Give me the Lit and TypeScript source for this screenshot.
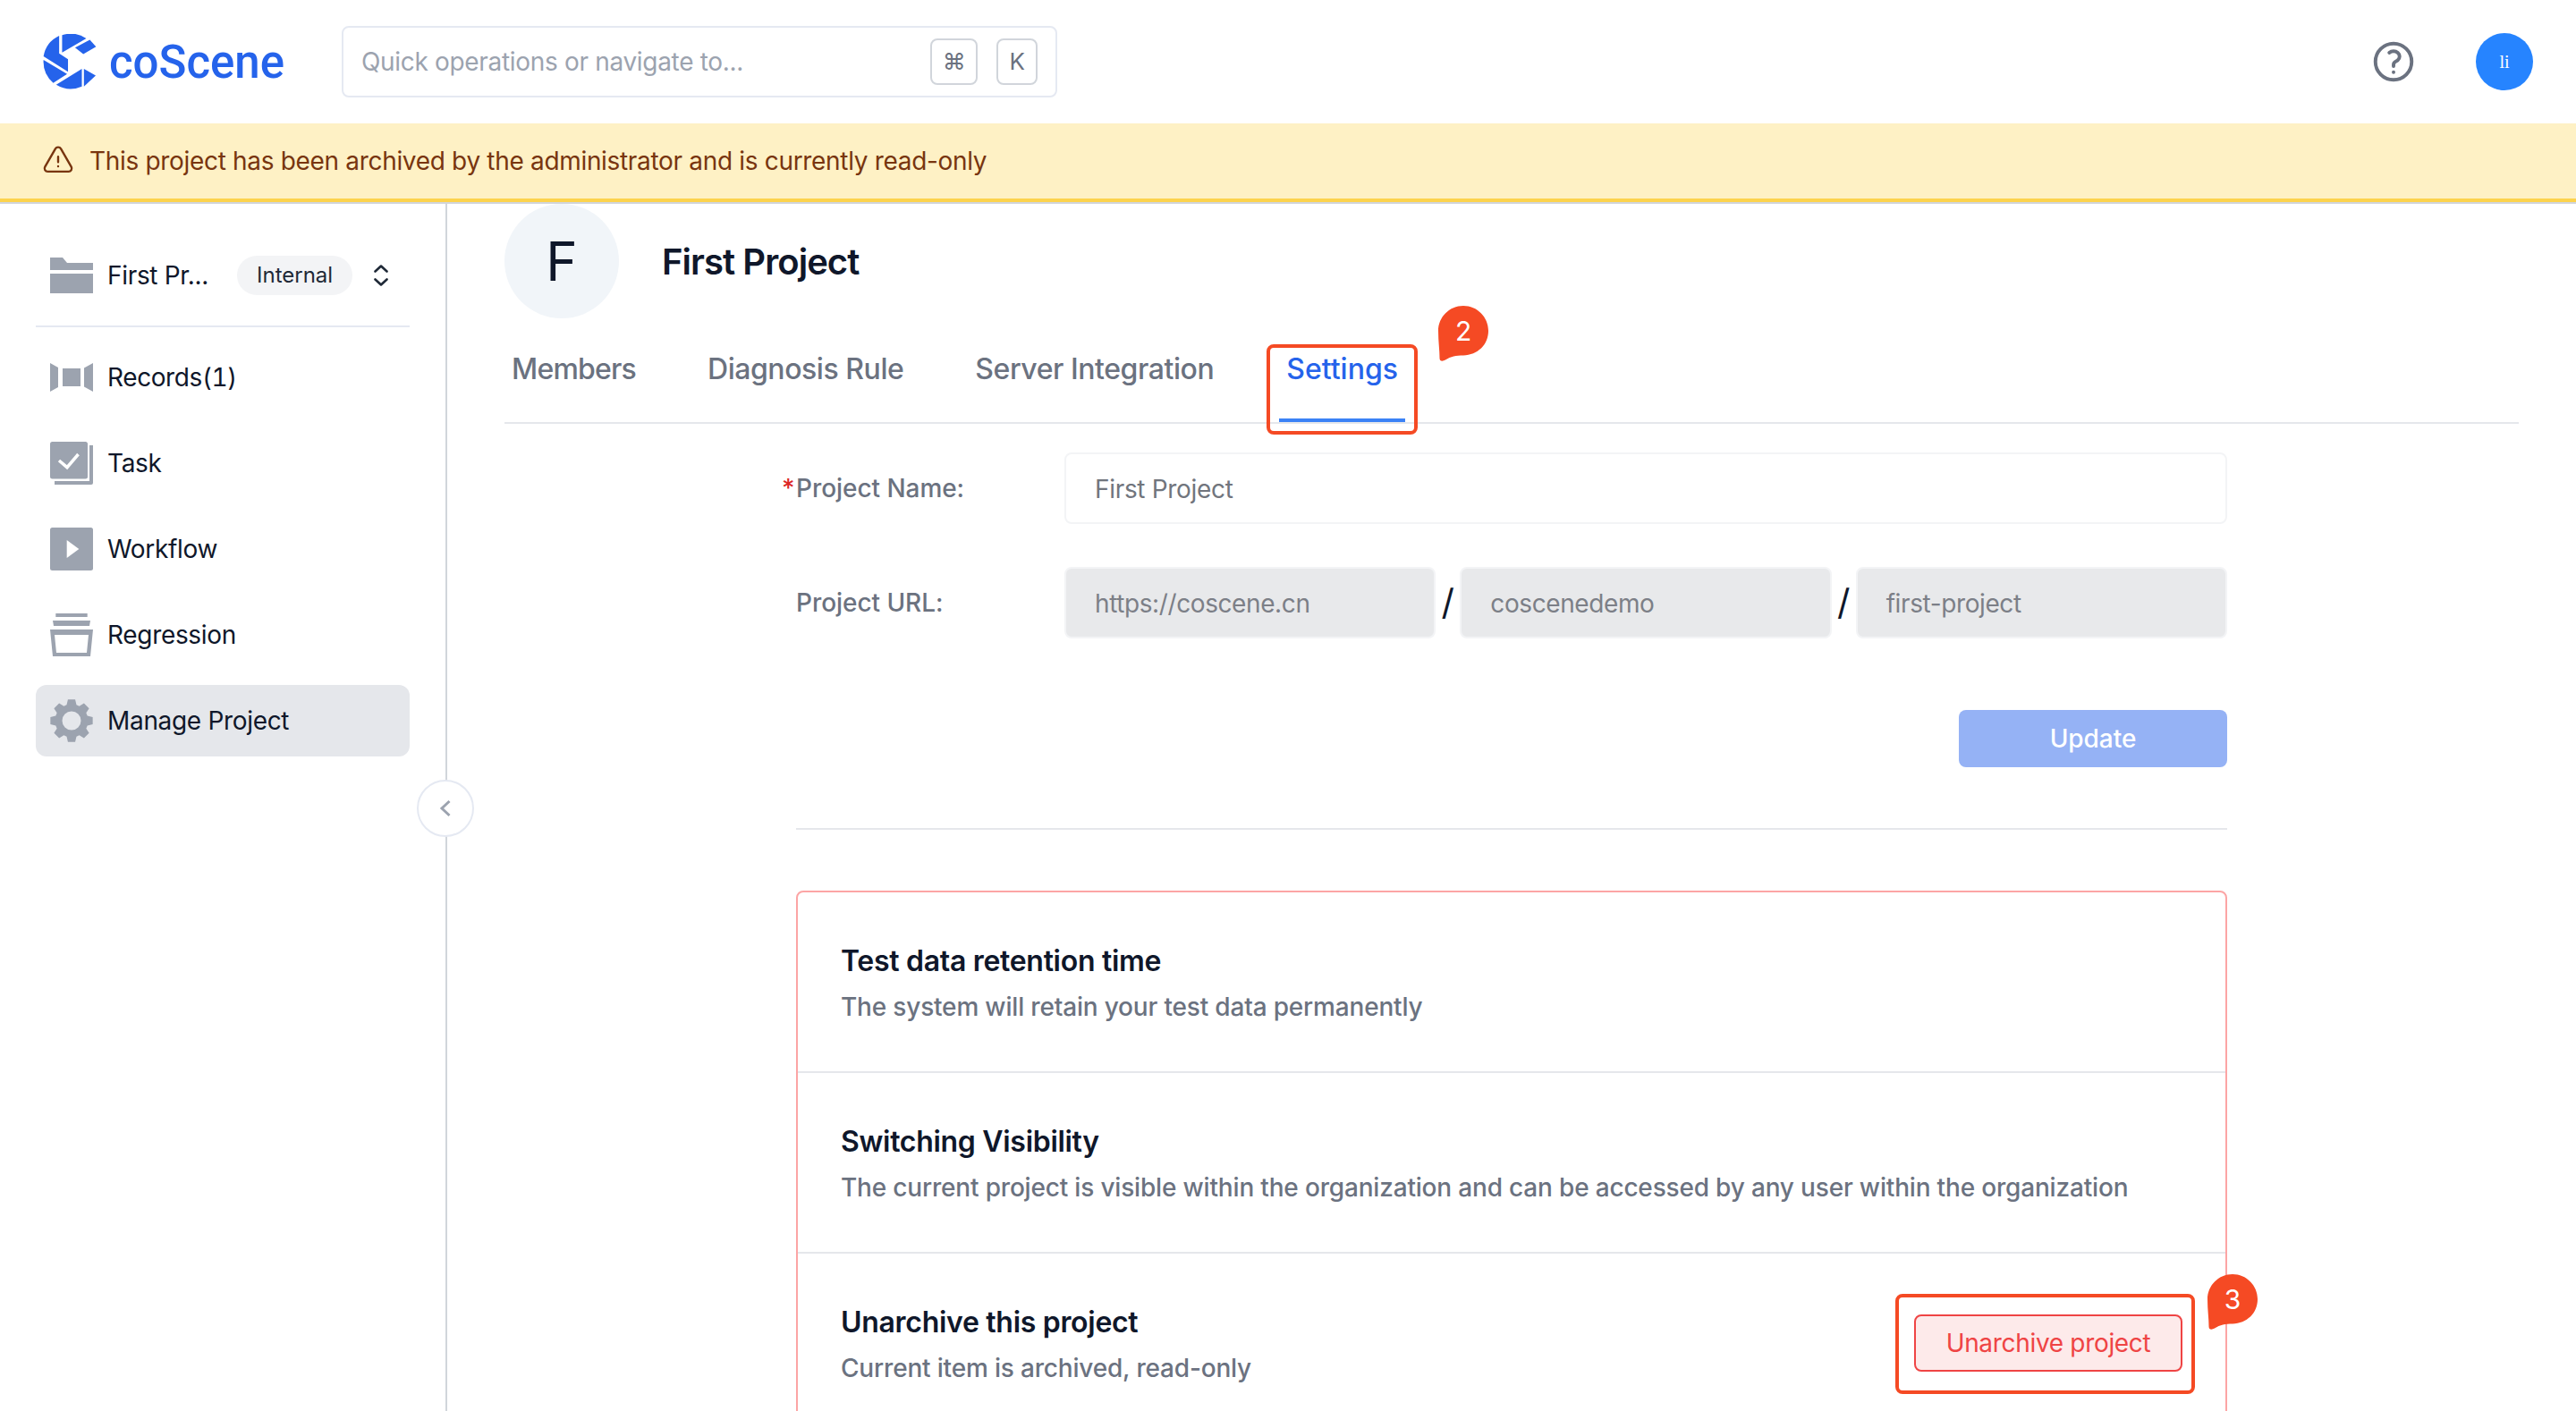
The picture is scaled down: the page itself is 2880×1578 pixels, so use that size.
import { LitElement, html, css } from "lit";
import { customElement } from "lit/decorators.js";

function gearPath(): string {
  const cx = 24, cy = 24, teeth = 8, outer = 24, root = 18.5, pts: string[] = [];
  const step = (Math.PI * 2) / teeth;
  for (let i = 0; i < teeth; i++) {
    const a = -Math.PI / 2 + i * step;
    const p = (r: number, d: number) =>
      `${(cx + r * Math.cos(a + d)).toFixed(2)} ${(cy + r * Math.sin(a + d)).toFixed(2)}`;
    pts.push(p(root, -0.3), p(outer, -0.17), p(outer, 0.17), p(root, 0.3));
  }
  return `M${pts.join("L")}Z M24 13.5a10.5 10.5 0 1 0 0 21a10.5 10.5 0 1 0 0-21Z`;
}

const bubble = (n: string, cls: string) => html`
  <div class="bubble ${cls}">
    <svg viewBox="0 0 56 62" width="56" height="62"><path fill="#f54a24" d="M28 0C43.5 0 56 12.5 56 28C56 43.5 44 55 28 55.5C20 55.7 14 56.5 8 60.5C4.5 62.5 1.5 62 1.5 58.5C1.500 50 0 40 0 28C0 12.5 12.5 0 28 0Z"/></svg>
    <span>${n}</span>
  </div>`;

@customElement("app-root")
export class AppRoot extends LitElement {
  static styles = css`
    :host { display: block; width: 100%; height: 100vh; overflow: hidden; background: #fff; font-family: Inter, "Liberation Sans", sans-serif; font-size: 28px; line-height: 40px; color: #0f172a; letter-spacing: -0.32px; }
    * { box-sizing: border-box; }
    .app { display: flex; flex-direction: column; height: 100%; }
    .header { flex: none; height: 138px; display: flex; align-items: center; padding: 0 48px; }
    .brand { width: 334px; display: flex; align-items: center; gap: 14px; flex: none; }
    .brand svg { display: block; }
    .brand-text { font-family: Roboto, sans-serif; font-weight: 500; font-size: 51px; line-height: 60px; color: #2563eb; letter-spacing: 0; padding-top: 2px; }
    .search { width: 800px; height: 80px; border: 2px solid #e5e9f2; border-radius: 8px; display: flex; align-items: center; padding: 0 20px; gap: 21px; color: #9ca3af; }
    .search-text { flex: 1; }
    .kbd { height: 52px; border: 2px solid #d1d5db; border-radius: 8px; display: flex; align-items: center; justify-content: center; color: #6b7280; font-size: 26px; }
    .kbd.cmd { width: 53px; }
    .kbd.k { width: 46px; }
    .right { margin-left: auto; display: flex; align-items: center; gap: 65px; }
    .right svg { display: block; }
    .user { width: 64px; height: 64px; border-radius: 50%; background: #2684ff; color: #fff; font-family: "Liberation Serif", serif; font-size: 20px; letter-spacing: 0; display: flex; align-items: center; justify-content: center; }
    .banner { flex: none; height: 88px; padding: 0 46px; background: #fef1c5; border-bottom: 4px solid #fcd34d; box-shadow: 0 2px 0 #d1d5db; display: flex; align-items: center; gap: 16px; color: #78350f; position: relative; z-index: 1; }
    .banner svg { display: block; flex: none; }
    .content { flex: 1; min-height: 0; display: flex; padding-top: 2px; }
    .side { flex: none; width: 500px; border-right: 2px solid #d1d5db; position: relative; padding: 0 40px; }
    .proj { height: 138px; border-bottom: 2px solid #e5e9f2; display: flex; align-items: center; padding: 24px 0 0 16px; }
    .proj svg { display: block; flex: none; }
    .proj-name { width: 113px; margin-left: 16px; margin-right: 1px; white-space: nowrap; }
    .badge { margin-left: 31px; height: 44px; padding: 0 22px; border-radius: 22px; background: #f3f4f6; color: #1f2937; font-size: 24px; letter-spacing: 0; display: flex; align-items: center; }
    .updown { margin-left: 24px; }
    .nav { display: flex; flex-direction: column; gap: 16px; padding-top: 16px; }
    .item { height: 80px; display: flex; align-items: center; gap: 16px; padding-left: 16px; border-radius: 12px; }
    .item svg { display: block; flex: none; }
    .item.on { background: #e5e7eb; }
    .count { font-variant-numeric: tabular-nums; letter-spacing: -0.4px; }
    .collapse { position: absolute; right: -32px; top: 644px; width: 64px; height: 64px; border-radius: 50%; background: #fff; border: 2px solid #e5e9f2; display: flex; align-items: center; justify-content: center; }
    .main { flex: 1; min-width: 0; padding: 0 64px; overflow: hidden; }
    .head { display: flex; align-items: center; gap: 48px; height: 128px; }
    .logo { width: 128px; height: 128px; border-radius: 50%; background: #f1f5f9; display: flex; align-items: center; justify-content: center; font-size: 60px; line-height: 72px; letter-spacing: 0; }
    .name { font-size: 40px; line-height: 56px; font-weight: 600; letter-spacing: -0.95px; padding-top: 2px; }
    .tabs { height: 118px; border-bottom: 2px solid #e5e7eb; display: flex; }
    .tab { position: relative; padding: 33px 8px 0; margin-right: 64px; border-bottom: 4px solid transparent; font-size: 32px; line-height: 48px; font-weight: 500; color: #6b7280; height: 116px; letter-spacing: -0.45px; }
    .tab.first { letter-spacing: -0.8px; }
    .tab.on { color: #2563eb; border-bottom-color: #3b82f6; letter-spacing: 0; margin-left: 1px; margin-right: 0; }
    .mark { position: absolute; border: 4px solid #f54a24; border-radius: 8px; pointer-events: none; letter-spacing: 0; }
    .tab .mark { left: -14px; top: 29px; width: 169px; height: 101px; }
    .bubble { position: absolute; width: 56px; height: 62px; color: #fff; }
    .bubble svg { display: block; }
    .bubble span { position: absolute; left: 0; top: 0; width: 56px; height: 56px; display: flex; align-items: center; justify-content: center; font-size: 30px; font-weight: 400; line-height: 1; letter-spacing: 0; }
    .b2 { left: 178px; top: -14px; }
    .b3 { left: 326px; top: -47px; }
    .form { width: 1600px; margin: 0 auto; padding-top: 32px; }
    .row { display: flex; align-items: center; height: 80px; margin-bottom: 48px; }
    .label { width: 300px; flex: none; font-weight: 500; color: #6b7280; letter-spacing: -0.05px; }
    .req { display: inline-block; width: 16px; margin-left: -16px; color: #dc2626; }
    .fields { flex: 1; display: flex; align-items: center; }
    .input { flex: 1; min-width: 0; height: 80px; border: 2px solid #f3f4f6; border-radius: 8px; padding: 1px 32px 0; display: flex; align-items: center; color: #71757d; }
    .input.off { background: #e8e9eb; color: #7c7f87; letter-spacing: -0.4px; }
    .slash { width: 27px; flex: none; text-align: center; font-size: 40px; color: #0f172a; letter-spacing: 0; }
    .actions { display: flex; justify-content: flex-end; margin-top: 80px; }
    .update { width: 300px; height: 64px; border-radius: 8px; background: #95b2f5; color: #fff; font-weight: 500; letter-spacing: -0.05px; display: flex; align-items: center; justify-content: center; }
    .rule { height: 2px; background: #e5e7eb; margin: 68px 0; }
    .card { border: 2px solid #fca5a5; border-radius: 8px; }
    .card-row { height: 200px; padding: 0 48px; display: flex; align-items: center; justify-content: space-between; }
    .card-row + .card-row { height: 202px; border-top: 2px solid #e5e7eb; }
    .title { font-size: 32px; line-height: 48px; font-weight: 600; letter-spacing: -0.3px; margin-top: 1px; }
    .desc { margin-top: 7px; color: #6b7280; font-weight: 500; letter-spacing: -0.18px; }
    .btn { position: relative; width: 300px; height: 64px; border: 2px solid #ef4444; border-radius: 8px; background: #fdeaea; color: #ef4444; display: flex; align-items: center; justify-content: center; }
    .btn .mark { left: -23px; top: -25px; width: 335px; height: 112px; }
  `;

  render() {
    return html`
      <div class="app">
        <header class="header">
          <div class="brand">
            <svg viewBox="54 54 180 188" width="60" height="62" fill="#2563eb">
              <path d="M118 58A95 95 0 0 1 200 69L118 117Z"/>
              <path d="M162 100L212 74L233 97L190 122Z"/>
              <path d="M108 60A95 95 0 0 0 55 130L138 182L138 140L108 120Z"/>
              <path d="M55 142A95 95 0 0 0 88 220L135 190Z"/>
              <path d="M98 226A95 95 0 0 0 185 232L185 172Z"/>
              <path d="M192 172L232 195L192 232Z"/>
            </svg>
            <span class="brand-text">coScene</span>
          </div>
          <div class="search">
            <span class="search-text">Quick operations or navigate to...</span>
            <span class="kbd cmd">⌘</span>
            <span class="kbd k">K</span>
          </div>
          <div class="right">
            <svg viewBox="0 0 24 24" width="54" height="54" fill="none" stroke="#6b7280" stroke-width="1.75" stroke-linecap="round" stroke-linejoin="round"><path d="M9.879 7.519c1.171-1.025 3.071-1.025 4.242 0 1.172 1.025 1.172 2.687 0 3.712-.203.179-.43.326-.67.442-.745.361-1.45.999-1.45 1.827v.75M21 12a9 9 0 11-18 0 9 9 0 0118 0zm-9 5.25h.008v.008H12v-.008z"/></svg>
            <div class="user">li</div>
          </div>
        </header>
        <div class="banner">
          <svg viewBox="0 0 24 24" width="38" height="38" fill="none" stroke="#78350f" stroke-width="1.5" stroke-linecap="round" stroke-linejoin="round"><path d="M12 9v3.75m-9.303 3.376c-.866 1.5.217 3.374 1.948 3.374h14.71c1.73 0 2.813-1.874 1.948-3.374L13.949 3.378c-.866-1.5-3.032-1.5-3.898 0L2.697 16.126zM12 15.75h.007v.008H12v-.008z"/></svg>
          <span>This project has been archived by the administrator and is currently read-only</span>
        </div>
        <div class="content">
          <aside class="side">
            <div class="proj">
              <svg viewBox="0 0 48 40" width="48" height="40" fill="#9ca3af"><path d="M0 0H14L19 6H48V14H0Z"/><path d="M0 18H48V40H0Z"/></svg>
              <span class="proj-name">First Pr...</span>
              <span class="badge">Internal</span>
              <svg class="updown" viewBox="0 0 16 24" width="16" height="24" fill="none" stroke="#1f2937" stroke-width="2.6" stroke-linecap="round" stroke-linejoin="round"><path d="M1.5 7.5L8 1.5L14.5 7.5"/><path d="M1.5 16.5L8 22.5L14.5 16.5"/></svg>
            </div>
            <nav class="nav">
              <div class="item">
                <svg viewBox="0 0 48 32" width="48" height="32" fill="#9ca3af"><path d="M0 0L9 5V27L0 32Z"/><path d="M14 6H34V26H14Z"/><path d="M48 0L38 5.5V26.5L48 32Z"/></svg>
                <span class="count">Records(1)</span>
              </div>
              <div class="item">
                <svg viewBox="0 0 48 48" width="48" height="48"><rect width="42" height="41.5" rx="2.5" fill="#9ca3af"/><path fill="#9ca3af" d="M44 4h4v42a2 2 0 0 1-2 2H5v-4h39Z"/><path d="M10 21L19 28.7L31.5 14" fill="none" stroke="#fff" stroke-width="3.5"/></svg>
                <span>Task</span>
              </div>
              <div class="item">
                <svg viewBox="0 0 48 48" width="48" height="48"><rect width="48" height="48" rx="2.5" fill="#9ca3af"/><path d="M18.7 14L32.3 24L18.7 34Z" fill="#fff"/></svg>
                <span>Workflow</span>
              </div>
              <div class="item">
                <svg viewBox="0 0 48 48" width="48" height="48" fill="#9ca3af"><path d="M6.300 0H41.700V4H6.300Z"/><path d="M3 8H45L44 14H4Z"/><path fill-rule="evenodd" d="M0 18H48L45 48H3ZM5 24L7 44H41L43 24Z"/></svg>
                <span>Regression</span>
              </div>
              <div class="item on">
                <svg viewBox="0 0 48 48" width="48" height="48" fill="#9ca3af"><path fill-rule="evenodd" d="${gearPath()}"/></svg>
                <span>Manage Project</span>
              </div>
            </nav>
            <div class="collapse">
              <svg viewBox="0 0 14 20" width="14" height="20" fill="none" stroke="#9ca3af" stroke-width="3"><path d="M11.500 2L3 10L11.500 18"/></svg>
            </div>
          </aside>
          <main class="main">
            <div class="head">
              <div class="logo">F</div>
              <div class="name">First Project</div>
            </div>
            <div class="tabs">
              <div class="tab first">Members</div>
              <div class="tab">Diagnosis Rule</div>
              <div class="tab">Server Integration</div>
              <div class="tab on">Settings<div class="mark"></div>${bubble("2", "b2")}</div>
            </div>
            <div class="form">
              <div class="row">
                <div class="label"><span class="req">*</span>Project Name:</div>
                <div class="fields"><div class="input">First Project</div></div>
              </div>
              <div class="row">
                <div class="label">Project URL:</div>
                <div class="fields">
                  <div class="input off">https://coscene.cn</div>
                  <div class="slash">/</div>
                  <div class="input off">coscenedemo</div>
                  <div class="slash">/</div>
                  <div class="input off">first-project</div>
                </div>
              </div>
              <div class="actions"><div class="update">Update</div></div>
              <div class="rule"></div>
              <div class="card">
                <div class="card-row">
                  <div><div class="title">Test data retention time</div><div class="desc">The system will retain your test data permanently</div></div>
                </div>
                <div class="card-row">
                  <div><div class="title">Switching Visibility</div><div class="desc">The current project is visible within the organization and can be accessed by any user within the organization</div></div>
                </div>
                <div class="card-row">
                  <div><div class="title">Unarchive this project</div><div class="desc">Current item is archived, read-only</div></div>
                  <div class="btn">Unarchive project<div class="mark"></div>${bubble("3", "b3")}</div>
                </div>
              </div>
            </div>
          </main>
        </div>
      </div>
    `;
  }
}
